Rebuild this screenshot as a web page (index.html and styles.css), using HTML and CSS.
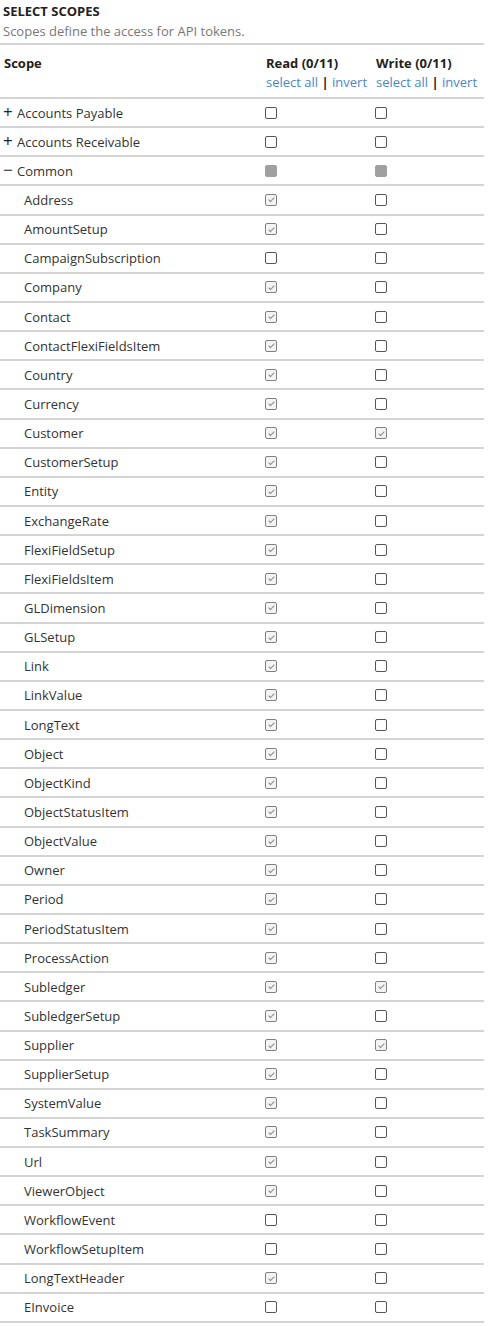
FILE: index.html
```html
<!DOCTYPE html>
<html lang="en">
<head>
    <meta charset="UTF-8">
    <title>Select scopes</title>
    <link rel="stylesheet" href="styles.css">
</head>
<body>
    <div id="scopes">
        <h2 class="title">Select scopes</h2>
        <p class="subtitle">Scopes define the access for API tokens.</p>

        <table class="scope-table">
            <thead>
                <tr>
                    <th class="col-scope">Scope</th>
                    <th class="col-read">Read (0/11)
                        <div class="links"><a href="#">select all</a> <b>|</b> <a href="#">invert</a></div>
                    </th>
                    <th class="col-write">Write (0/11)
                        <div class="links"><a href="#">select all</a> <b>|</b> <a href="#">invert</a></div>
                    </th>
                </tr>
            </thead>
            <tbody>
                <tr class="group"><td><span class="toggle">+</span>Accounts Payable</td><td><span class="cb"></span></td><td><span class="cb"></span></td></tr>
                <tr class="group"><td><span class="toggle">+</span>Accounts Receivable</td><td><span class="cb"></span></td><td><span class="cb"></span></td></tr>
                <tr class="group"><td><span class="toggle">&minus;</span>Common</td><td><span class="cb mixed"></span></td><td><span class="cb mixed"></span></td></tr>
                <tr><td>Address</td><td><span class="cb on"></span></td><td><span class="cb"></span></td></tr>
                <tr><td>AmountSetup</td><td><span class="cb on"></span></td><td><span class="cb"></span></td></tr>
                <tr><td>CampaignSubscription</td><td><span class="cb"></span></td><td><span class="cb"></span></td></tr>
                <tr><td>Company</td><td><span class="cb on"></span></td><td><span class="cb"></span></td></tr>
                <tr><td>Contact</td><td><span class="cb on"></span></td><td><span class="cb"></span></td></tr>
                <tr><td>ContactFlexiFieldsItem</td><td><span class="cb on"></span></td><td><span class="cb"></span></td></tr>
                <tr><td>Country</td><td><span class="cb on"></span></td><td><span class="cb"></span></td></tr>
                <tr><td>Currency</td><td><span class="cb on"></span></td><td><span class="cb"></span></td></tr>
                <tr><td>Customer</td><td><span class="cb on"></span></td><td><span class="cb on"></span></td></tr>
                <tr><td>CustomerSetup</td><td><span class="cb on"></span></td><td><span class="cb"></span></td></tr>
                <tr><td>Entity</td><td><span class="cb on"></span></td><td><span class="cb"></span></td></tr>
                <tr><td>ExchangeRate</td><td><span class="cb on"></span></td><td><span class="cb"></span></td></tr>
                <tr><td>FlexiFieldSetup</td><td><span class="cb on"></span></td><td><span class="cb"></span></td></tr>
                <tr><td>FlexiFieldsItem</td><td><span class="cb on"></span></td><td><span class="cb"></span></td></tr>
                <tr><td>GLDimension</td><td><span class="cb on"></span></td><td><span class="cb"></span></td></tr>
                <tr><td>GLSetup</td><td><span class="cb on"></span></td><td><span class="cb"></span></td></tr>
                <tr><td>Link</td><td><span class="cb on"></span></td><td><span class="cb"></span></td></tr>
                <tr><td>LinkValue</td><td><span class="cb on"></span></td><td><span class="cb"></span></td></tr>
                <tr><td>LongText</td><td><span class="cb on"></span></td><td><span class="cb"></span></td></tr>
                <tr><td>Object</td><td><span class="cb on"></span></td><td><span class="cb"></span></td></tr>
                <tr><td>ObjectKind</td><td><span class="cb on"></span></td><td><span class="cb"></span></td></tr>
                <tr><td>ObjectStatusItem</td><td><span class="cb on"></span></td><td><span class="cb"></span></td></tr>
                <tr><td>ObjectValue</td><td><span class="cb on"></span></td><td><span class="cb"></span></td></tr>
                <tr><td>Owner</td><td><span class="cb on"></span></td><td><span class="cb"></span></td></tr>
                <tr><td>Period</td><td><span class="cb on"></span></td><td><span class="cb"></span></td></tr>
                <tr><td>PeriodStatusItem</td><td><span class="cb on"></span></td><td><span class="cb"></span></td></tr>
                <tr><td>ProcessAction</td><td><span class="cb on"></span></td><td><span class="cb"></span></td></tr>
                <tr><td>Subledger</td><td><span class="cb on"></span></td><td><span class="cb on"></span></td></tr>
                <tr><td>SubledgerSetup</td><td><span class="cb on"></span></td><td><span class="cb"></span></td></tr>
                <tr><td>Supplier</td><td><span class="cb on"></span></td><td><span class="cb on"></span></td></tr>
                <tr><td>SupplierSetup</td><td><span class="cb on"></span></td><td><span class="cb"></span></td></tr>
                <tr><td>SystemValue</td><td><span class="cb on"></span></td><td><span class="cb"></span></td></tr>
                <tr><td>TaskSummary</td><td><span class="cb on"></span></td><td><span class="cb"></span></td></tr>
                <tr><td>Url</td><td><span class="cb on"></span></td><td><span class="cb"></span></td></tr>
                <tr><td>ViewerObject</td><td><span class="cb on"></span></td><td><span class="cb"></span></td></tr>
                <tr><td>WorkflowEvent</td><td><span class="cb"></span></td><td><span class="cb"></span></td></tr>
                <tr><td>WorkflowSetupItem</td><td><span class="cb"></span></td><td><span class="cb"></span></td></tr>
                <tr><td>LongTextHeader</td><td><span class="cb on"></span></td><td><span class="cb"></span></td></tr>
                <tr><td>EInvoice</td><td><span class="cb"></span></td><td><span class="cb"></span></td></tr>
            </tbody>
        </table>
    </div>
</body>
</html>
```

FILE: styles.css
```css
* {
    box-sizing: border-box;
}
body {
    margin: 0;
    background-color: white;
    color: #333;
    font-family: "Open Sans", "Noto Sans", sans-serif;
    font-size: 13px;
}
#scopes {
    width: 484px;
}
#scopes .title {
    margin: 0;
    padding: 2px 3px 0;
    font-size: 13px;
    font-weight: bold;
    text-transform: uppercase;
    line-height: 18px;
    color: #222;
}
#scopes .subtitle {
    margin: 0;
    padding: 2px 3px 3px;
    color: #777;
    line-height: 18px;
    border-bottom: 2px solid #d4d4d4;
}
.scope-table {
    width: 100%;
    border-collapse: collapse;
}
.scope-table th {
    text-align: left;
    vertical-align: top;
    padding: 9px 4px 0;
    height: 53px;
    font-weight: bold;
    line-height: 18px;
    color: #222;
    border-bottom: 2px solid #d4d4d4;
}
.scope-table .col-read {
    width: 110px;
}
.scope-table .col-write {
    width: 112px;
}
.scope-table .links {
    font-weight: normal;
    margin-top: 1px;
}
.links a {
    color: #4a86c8;
    text-decoration: none;
}
.links b {
    color: #222;
}
.scope-table td {
    height: 29.15px;
    padding: 0 4px;
    border-bottom: 2px solid #d4d4d4;
    vertical-align: middle;
}
.scope-table td:first-child {
    padding-left: 24px;
}
.scope-table tr.group td:first-child {
    padding-left: 3px;
}
.toggle {
    display: inline-block;
    width: 11px;
    margin-right: 3px;
    font-size: 17px;
    line-height: 12px;
    color: #222;
}
/* checkbox look-alike */
.cb {
    display: block;
    position: relative;
    width: 12px;
    height: 12px;
    margin-left: -1px;
    border: 1px solid #555;
    border-radius: 2px;
    background-color: white;
}
.cb.on {
    border-color: #808080;
    background-color: #f4f4f4;
}
.cb.on::after {
    content: "";
    position: absolute;
    left: 3.5px;
    top: 1.5px;
    width: 2px;
    height: 5px;
    border: solid #888;
    border-width: 0 1px 1px 0;
    transform: rotate(45deg);
}
.cb.mixed {
    border-color: #a0a0a0;
    background-color: #a0a0a0;
}
```
